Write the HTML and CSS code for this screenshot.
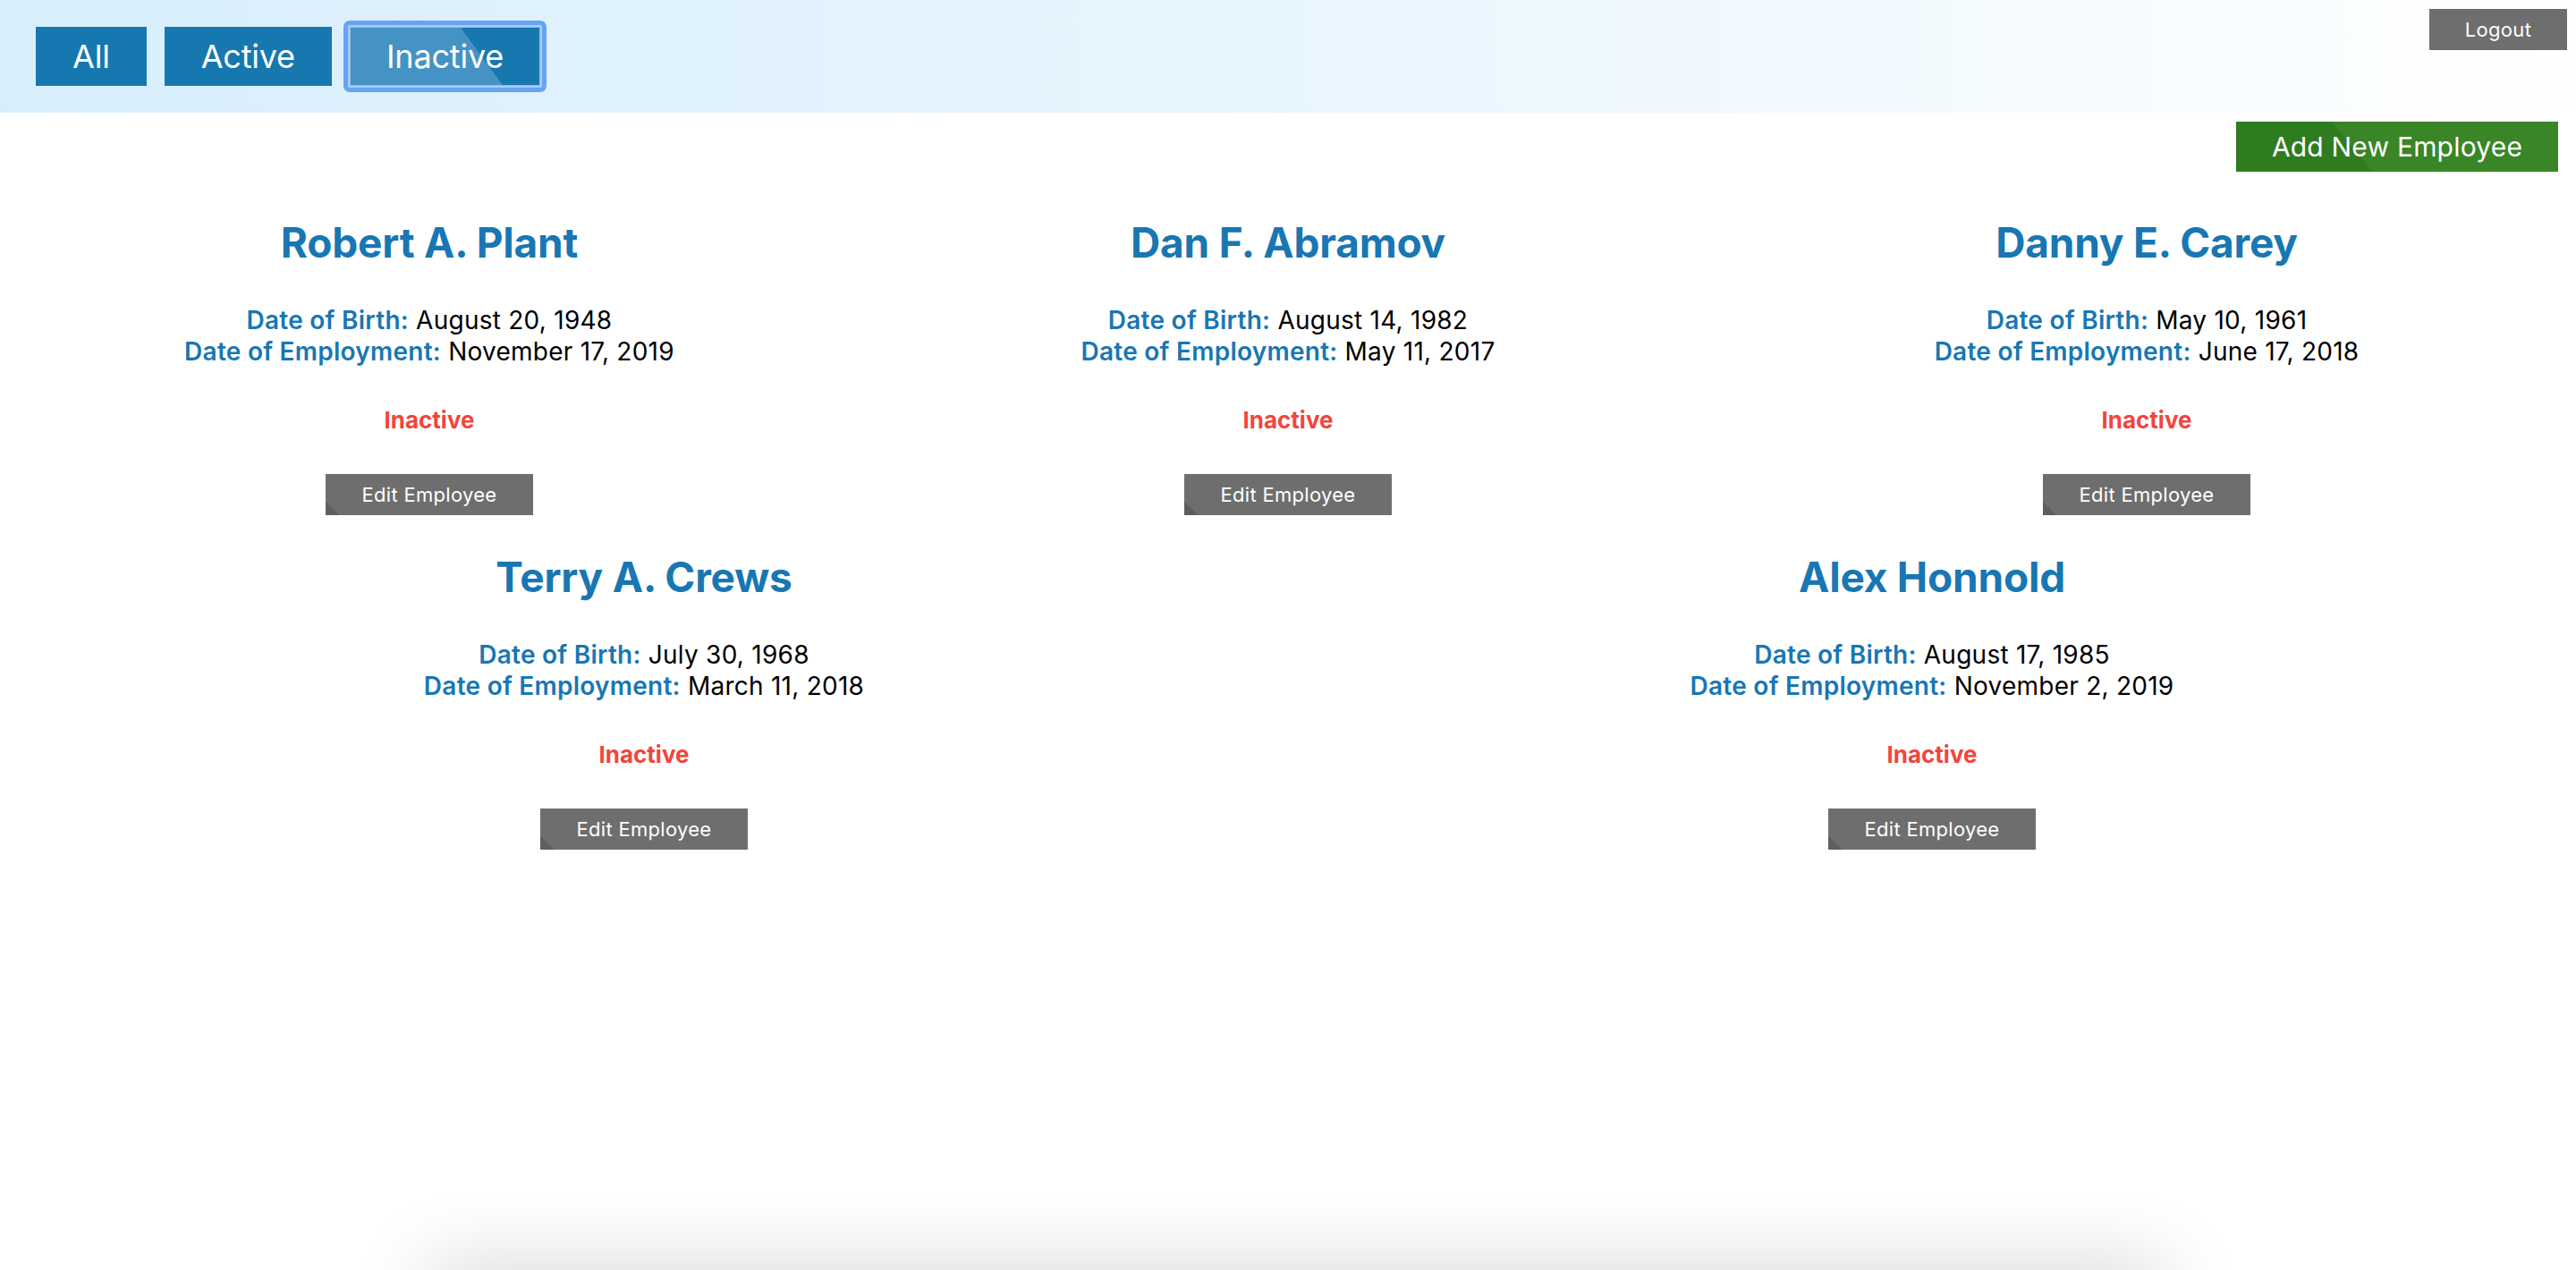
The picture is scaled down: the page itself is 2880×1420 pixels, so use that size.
FILE: index.html
```html
<!DOCTYPE html>
<html lang="en">
<head>
<meta charset="utf-8">
<title>Employees</title>
<link rel="stylesheet" href="styles.css">
</head>
<body>
<header class="topbar">
  <nav class="filters">
    <button class="filter">All</button>
    <button class="filter">Active</button>
    <button class="filter filter-current">Inactive</button>
  </nav>
  <button class="logout">Logout</button>
</header>
<div class="toolbar">
  <button class="add-btn">Add New Employee</button>
</div>
<main class="grid">
  <section class="card">
    <h2 class="name">Robert A. Plant</h2>
    <p class="dates"><span class="label">Date of Birth:</span> August 20, 1948<br><span class="label">Date of Employment:</span> November 17, 2019</p>
    <p class="status">Inactive</p>
    <button class="edit-btn">Edit Employee</button>
  </section>
  <section class="card">
    <h2 class="name">Dan F. Abramov</h2>
    <p class="dates"><span class="label">Date of Birth:</span> August 14, 1982<br><span class="label">Date of Employment:</span> May 11, 2017</p>
    <p class="status">Inactive</p>
    <button class="edit-btn">Edit Employee</button>
  </section>
  <section class="card">
    <h2 class="name">Danny E. Carey</h2>
    <p class="dates"><span class="label">Date of Birth:</span> May 10, 1961<br><span class="label">Date of Employment:</span> June 17, 2018</p>
    <p class="status">Inactive</p>
    <button class="edit-btn">Edit Employee</button>
  </section>
  <section class="card">
    <h2 class="name">Terry A. Crews</h2>
    <p class="dates"><span class="label">Date of Birth:</span> July 30, 1968<br><span class="label">Date of Employment:</span> March 11, 2018</p>
    <p class="status">Inactive</p>
    <button class="edit-btn">Edit Employee</button>
  </section>
  <section class="card">
    <h2 class="name">Alex Honnold</h2>
    <p class="dates"><span class="label">Date of Birth:</span> August 17, 1985<br><span class="label">Date of Employment:</span> November 2, 2019</p>
    <p class="status">Inactive</p>
    <button class="edit-btn">Edit Employee</button>
  </section>
</main>
<div class="bottom-shadow"></div>
</body>
</html>
```
FILE: styles.css
```css
* { box-sizing: border-box; }
html, body { margin: 0; padding: 0; }
body {
  font-family: Inter, "Noto Sans", "Liberation Sans", sans-serif;
  background: #ffffff;
  color: #000;
  overflow: hidden;
  height: 1420px;
}
button {
  font-family: inherit;
  border: 0;
  cursor: pointer;
  color: #fff;
}
.topbar {
  height: 126px;
  display: flex;
  align-items: flex-start;
  padding: 0 10px 0 40px;
  background: linear-gradient(to right, #d8eefc 0%, #e6f5fe 45%, #ffffff 100%);
}
.filters {
  display: flex;
  gap: 20px;
  margin-top: 30px;
}
.filter {
  position: relative;
  height: 66px;
  padding: 0 41px;
  font-size: 36px;
  letter-spacing: -0.2px;
  background: #1778b0;
}
.filter-current {
  background: linear-gradient(54deg, #4493c4 0%, #4493c4 65.7%, #1778b0 65.7%, #1778b0 100%);
  box-shadow: inset 0 0 0 1px #8fbfe8;
}
.filter-current::after {
  content: "";
  position: absolute;
  inset: -7px;
  border: 5px solid #66a3f5;
  border-radius: 7px;
  box-shadow: inset 0 0 0 2px #a9ccf8;
  pointer-events: none;
}
.logout {
  margin-left: auto;
  margin-top: 10px;
  width: 154px;
  height: 46px;
  font-size: 22px;
  letter-spacing: 0.3px;
  background: #6e6e6e;
}
.toolbar {
  display: flex;
  justify-content: flex-end;
  padding: 10px 20px 0 0;
}
.add-btn {
  width: 360px;
  height: 56px;
  font-size: 30px;
  letter-spacing: 0.2px;
  background: linear-gradient(51deg, #2f7b20 0%, #2f7b20 37.7%, #3a8527 37.7%, #3a8527 100%);
}
.grid {
  display: flex;
  flex-wrap: wrap;
  justify-content: space-around;
  margin-top: 51px;
}
.card {
  width: 33.3333%;
  text-align: center;
  padding-bottom: 41px;
}
.name {
  margin: 0 0 42px;
  font-size: 46px;
  line-height: 56px;
  font-weight: 700;
  color: #1877b3;
  letter-spacing: -0.2px;
}
.dates {
  margin: 0 0 44px;
  font-size: 28px;
  line-height: 35px;
  letter-spacing: 0.25px;
}
.label {
  color: #1877b3;
  font-weight: 600;
}
.status {
  margin: 0 0 45px;
  font-size: 26px;
  line-height: 30px;
  font-weight: 700;
  color: #f2453d;
}
.edit-btn {
  width: 232px;
  height: 46px;
  font-size: 22px;
  letter-spacing: 0.3px;
  background: linear-gradient(45deg, #5e5e5e 0, #5e5e5e 11px, #6e6e6e 11px, #6e6e6e 100%);
}
.bottom-shadow {
  position: fixed;
  left: 480px;
  width: 1940px;
  top: 1420px;
  height: 60px;
  box-shadow: 0 0 90px rgba(0, 0, 0, 0.2);
}
```
